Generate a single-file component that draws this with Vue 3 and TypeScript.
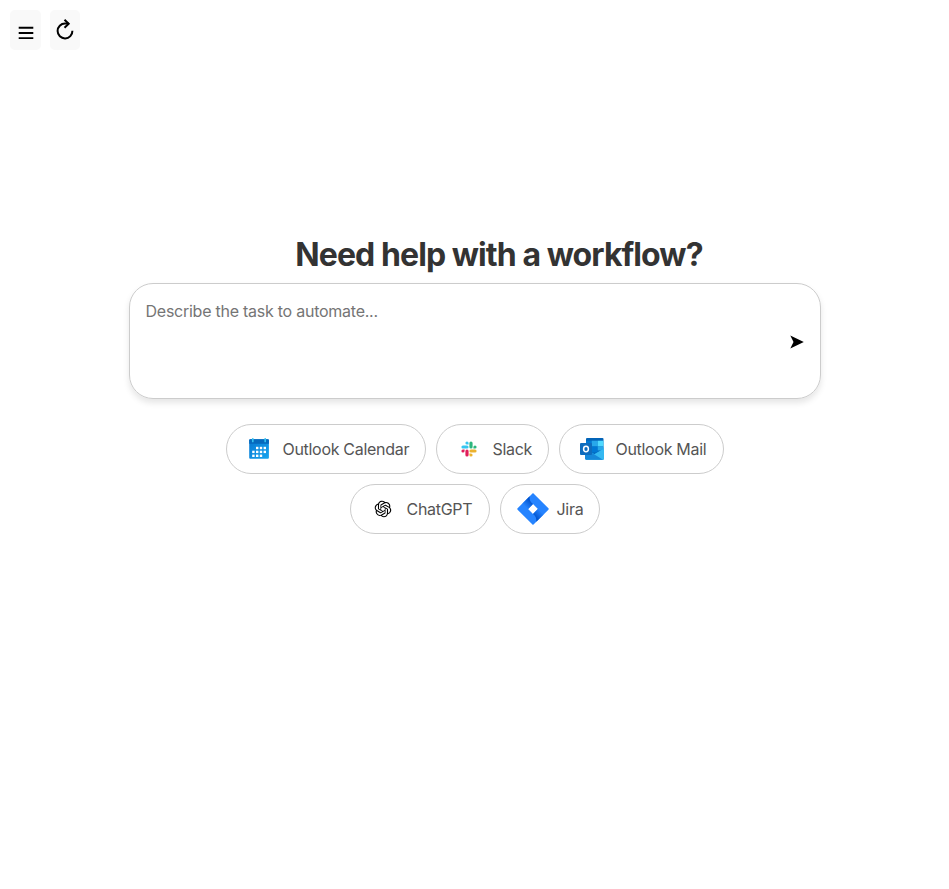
<script setup lang="ts">
import { ref } from 'vue'

type IconName = 'calendar' | 'slack' | 'outlook' | 'chatgpt' | 'jira'

interface Suggestion {
  label: string
  icon: IconName
}

const task = ref('')

const suggestions: Suggestion[] = [
  { label: 'Outlook Calendar', icon: 'calendar' },
  { label: 'Slack', icon: 'slack' },
  { label: 'Outlook Mail', icon: 'outlook' },
  { label: 'ChatGPT', icon: 'chatgpt' },
  { label: 'Jira', icon: 'jira' },
]

const calendarDays: [number, number][] = [
  [13, 13.8], [16.8, 13.8], [20.6, 13.8],
  [9.2, 17.7], [13, 17.7], [16.8, 17.7], [20.6, 17.7],
  [9.2, 21.6], [13, 21.6], [16.8, 21.6],
]
</script>

<template>
  <div class="page">
    <nav class="toolbar">
      <button class="tool menu" type="button" aria-label="Menu">
        <svg width="16" height="16" viewBox="0 0 16 16">
          <path d="M.7 3.7h14.6M.7 9h14.6M.7 14.1h14.6" fill="none" stroke="#000" stroke-width="1.9" />
        </svg>
      </button>
      <button class="tool reload" type="button" aria-label="Reload">
        <svg width="18" height="22" viewBox="0 0 18 22">
          <path d="M12.5 5.6H9a7.4 7.4 0 1 0 7.4 7.2" fill="none" stroke="#000" stroke-width="2" />
          <path d="M8.5 1.7l4.2 4-4.2 4" fill="none" stroke="#000" stroke-width="2" />
        </svg>
      </button>
    </nav>

    <main class="content">
      <h1 class="title">Need help with a workflow?</h1>

      <form class="prompt" @submit.prevent>
        <textarea v-model="task" class="input" placeholder="Describe the task to automate..."></textarea>
        <button class="send" type="submit" aria-label="Send">
          <svg width="14" height="14" viewBox="0 0 14 14"><path d="M.3.5 13.8 7 .3 13.4 3.5 7z" /></svg>
        </button>
      </form>

      <div class="suggestions">
        <button v-for="s in suggestions" :key="s.icon" type="button" class="chip" :class="s.icon">
          <svg v-if="s.icon === 'calendar'" class="icon" viewBox="0 0 32 32">
            <defs>
              <linearGradient id="cal" x1="0" y1="0" x2="1" y2="1">
                <stop offset="0" stop-color="#0877d2" />
                <stop offset="1" stop-color="#18a5ee" />
              </linearGradient>
            </defs>
            <rect x="6.2" y="6.2" width="19.7" height="19.6" rx="1" fill="url(#cal)" />
            <path d="M6.2 10.8V7.2a1 1 0 0 1 1-1h17.7a1 1 0 0 1 1 1v3.6z" fill="#0669bd" />
            <path d="M9.8 5.8v2.6M22.2 5.8v2.6" stroke="#36c2f0" stroke-width="1.7" stroke-linecap="round" />
            <rect v-for="([x, y], i) in calendarDays" :key="i" :x="x" :y="y" width="2.4" height="2.4" fill="#fff" />
          </svg>

          <svg v-else-if="s.icon === 'slack'" class="icon" viewBox="0 0 32 32">
            <g transform="translate(8.4 8.4) scale(.633)">
              <path fill="#e01e5a" d="M5.042 15.165a2.528 2.528 0 0 1-2.52 2.523A2.528 2.528 0 0 1 0 15.165a2.527 2.527 0 0 1 2.522-2.52h2.52v2.52zM6.313 15.165a2.527 2.527 0 0 1 2.521-2.52 2.527 2.527 0 0 1 2.521 2.52v6.313A2.528 2.528 0 0 1 8.834 24a2.528 2.528 0 0 1-2.521-2.522v-6.313z" />
              <path fill="#36c5f0" d="M8.834 5.042a2.528 2.528 0 0 1-2.521-2.52A2.528 2.528 0 0 1 8.834 0a2.528 2.528 0 0 1 2.521 2.522v2.52H8.834zM8.834 6.313a2.528 2.528 0 0 1 2.521 2.521 2.528 2.528 0 0 1-2.521 2.521H2.522A2.528 2.528 0 0 1 0 8.834a2.528 2.528 0 0 1 2.522-2.521h6.312z" />
              <path fill="#2eb67d" d="M18.956 8.834a2.528 2.528 0 0 1 2.522-2.521A2.528 2.528 0 0 1 24 8.834a2.528 2.528 0 0 1-2.522 2.521h-2.522V8.834zM17.688 8.834a2.528 2.528 0 0 1-2.523 2.521 2.527 2.527 0 0 1-2.52-2.521V2.522A2.527 2.527 0 0 1 15.165 0a2.528 2.528 0 0 1 2.523 2.522v6.312z" />
              <path fill="#ecb22e" d="M15.165 18.956a2.528 2.528 0 0 1 2.523 2.522A2.528 2.528 0 0 1 15.165 24a2.527 2.527 0 0 1-2.52-2.522v-2.522h2.52zM15.165 17.688a2.527 2.527 0 0 1-2.52-2.523 2.526 2.526 0 0 1 2.52-2.52h6.313A2.527 2.527 0 0 1 24 15.165a2.528 2.528 0 0 1-2.522 2.523h-6.313z" />
            </g>
          </svg>

          <svg v-else-if="s.icon === 'outlook'" class="icon" viewBox="0 0 32 32">
            <path d="M11 5h15.5a1 1 0 0 1 1 1v15H10V6a1 1 0 0 1 1-1z" fill="#0364b8" />
            <path d="M10 7.7h5.7v5.8H10z" fill="#0078d4" />
            <path d="M15.7 7.7h6v5.8h-6z" fill="#28a8ea" />
            <path d="M21.7 7.7h5.8v5.8h-5.8z" fill="#50d9ff" />
            <path d="M15.7 13.5h6v6h-6z" fill="#0078d4" />
            <path d="M21.7 13.5h5.8v4h-5.8z" fill="#28a8ea" />
            <path d="M28 15.6v10a1.2 1.2 0 0 1-1.2 1.2H10.2L9 25.6v-9.9l9.5 5.4z" fill="#1c9fe5" />
            <path d="M28 15.6 10 26.5l.5.3h16.3a1.2 1.2 0 0 0 1.2-1.2z" fill="#35b8f1" />
            <path d="m9 15.7 18 11.1H10.2A1.2 1.2 0 0 1 9 25.6z" fill="#1688d9" />
            <rect x="4" y="10" width="12" height="12" rx="1" fill="#0f6cbd" />
            <ellipse cx="10" cy="16" rx="2.4" ry="2.7" fill="none" stroke="#fff" stroke-width="1.5" />
          </svg>

          <svg v-else-if="s.icon === 'chatgpt'" class="icon" viewBox="0 0 32 32">
            <path transform="translate(7.7 7.7) scale(.69)" d="M22.2819 9.8211a5.9847 5.9847 0 0 0-.5157-4.9108 6.0462 6.0462 0 0 0-6.5098-2.9A6.0651 6.0651 0 0 0 4.9807 4.1818a5.9847 5.9847 0 0 0-3.9977 2.9 6.0462 6.0462 0 0 0 .7427 7.0966 5.98 5.98 0 0 0 .511 4.9107 6.051 6.051 0 0 0 6.5146 2.9001A5.9847 5.9847 0 0 0 13.2599 24a6.0557 6.0557 0 0 0 5.7718-4.2058 5.9894 5.9894 0 0 0 3.9977-2.9001 6.0557 6.0557 0 0 0-.7475-7.0729zm-9.022 12.6081a4.4755 4.4755 0 0 1-2.8764-1.0408l.1419-.0804 4.7783-2.7582a.7948.7948 0 0 0 .3927-.6813v-6.7369l2.02 1.1686a.071.071 0 0 1 .038.052v5.5826a4.504 4.504 0 0 1-4.4945 4.4944zm-9.6607-4.1254a4.4708 4.4708 0 0 1-.5346-3.0137l.142.0852 4.783 2.7582a.7712.7712 0 0 0 .7806 0l5.8428-3.3685v2.3324a.0804.0804 0 0 1-.0332.0615L9.74 19.9502a4.4992 4.4992 0 0 1-6.1408-1.6464zM2.3408 7.8956a4.485 4.485 0 0 1 2.3655-1.9728V11.6a.7664.7664 0 0 0 .3879.6765l5.8144 3.3543-2.0201 1.1685a.0757.0757 0 0 1-.071 0l-4.8303-2.7865A4.504 4.504 0 0 1 2.3408 7.872zm16.5963 3.8558L13.1038 8.364 15.1192 7.2a.0757.0757 0 0 1 .071 0l4.8303 2.7913a4.4944 4.4944 0 0 1-.6765 8.1042v-5.6772a.79.79 0 0 0-.407-.667zm2.0107-3.0231l-.142-.0852-4.7735-2.7818a.7759.7759 0 0 0-.7854 0L9.409 9.2297V6.8974a.0662.0662 0 0 1 .0284-.0615l4.8303-2.7866a4.4992 4.4992 0 0 1 6.6802 4.66zM8.3065 12.863l-2.02-1.1638a.0804.0804 0 0 1-.038-.0567V6.0742a4.4992 4.4992 0 0 1 7.3757-3.4537l-.142.0805L8.704 5.459a.7948.7948 0 0 0-.3927.6813zm1.0976-2.3654l2.602-1.4998 2.6069 1.4998v2.9994l-2.5974 1.4997-2.6067-1.4997Z" />
          </svg>

          <svg v-else class="icon" viewBox="0 0 32 32">
            <defs>
              <linearGradient id="jiraTop" gradientUnits="userSpaceOnUse" x1="15.5" y1="8" x2="9" y2="14.5">
                <stop offset=".1" stop-color="#0052cc" />
                <stop offset="1" stop-color="#2684ff" />
              </linearGradient>
              <linearGradient id="jiraBottom" gradientUnits="userSpaceOnUse" x1="16.5" y1="24" x2="23" y2="17.5">
                <stop offset=".1" stop-color="#0052cc" />
                <stop offset="1" stop-color="#2684ff" />
              </linearGradient>
            </defs>
            <path fill="#2684ff" d="M16 0 31.4 15.3a1 1 0 0 1 0 1.4L16 32 .6 16.7a1 1 0 0 1 0-1.4zM16 11.1 11.1 16l4.9 4.9 4.9-4.9z" />
            <path fill="url(#jiraTop)" d="M16 11.1a8.2 8.2 0 0 1-3.3-7.8L5.5 10.4l5.6 5.6z" />
            <path fill="url(#jiraBottom)" d="M20.9 16 16 20.9a8.2 8.2 0 0 1 3.3 7.8l7.2-7.1z" />
          </svg>
          <span class="label">{{ s.label }}</span>
        </button>
      </div>
    </main>
  </div>
</template>

<style>
body {
  margin: 0;
  background: #fff;
}
</style>

<style scoped>
.page {
  box-sizing: border-box;
  min-height: 889px;
  padding: 10px;
  font-family: Inter, "Liberation Sans", sans-serif;
}
button {
  font-family: inherit;
  border: 0;
}
.toolbar {
  display: flex;
  gap: 9px;
}
.tool {
  display: flex;
  justify-content: center;
  width: 31px;
  height: 40px;
  padding: 14px 0 0;
  border-radius: 5px;
  background: #f9f9f9;
}
.reload {
  width: 30px;
  padding-top: 8px;
}
.content {
  display: flex;
  flex-direction: column;
  align-items: center;
  padding-top: 186px;
}
.title {
  margin: 0 0 9px;
  padding-left: 49px;
  color: #333;
  font-size: 32px;
  font-weight: 700;
  line-height: 38px;
  letter-spacing: -0.92px;
  white-space: nowrap;
}
.prompt {
  box-sizing: border-box;
  display: flex;
  align-items: center;
  width: 692px;
  height: 116px;
  padding: 16px;
  border: 1px solid #ccc;
  border-radius: 24px;
  box-shadow: 0 4px 6px rgba(0, 0, 0, 0.1);
}
.input {
  flex: 1;
  height: 82px;
  padding: 0;
  border: 0;
  outline: 0;
  resize: none;
  background: transparent;
  color: #333;
  font: 16px/22px Inter, "Liberation Sans", sans-serif;
  letter-spacing: -0.25px;
}
.input::placeholder {
  color: #757575;
}
.send {
  display: flex;
  padding: 2px 0 0;
  background: transparent;
}
.suggestions {
  display: flex;
  flex-wrap: wrap;
  justify-content: center;
  gap: 10px;
  width: 600px;
  margin-top: 25px;
}
.chip {
  box-sizing: border-box;
  display: flex;
  align-items: center;
  gap: 8px;
  height: 50px;
  padding: 0 16px;
  border: 1px solid #ccc;
  border-radius: 25px;
  background: #fff;
  color: #555;
  font-size: 16px;
  letter-spacing: -0.3px;
  white-space: nowrap;
}
.calendar { width: 200px; }
.slack { width: 113px; }
.outlook { width: 165px; }
.chatgpt { width: 140px; }
.jira { width: 100px; }
.icon {
  flex: none;
  width: 32px;
  height: 32px;
}
</style>
